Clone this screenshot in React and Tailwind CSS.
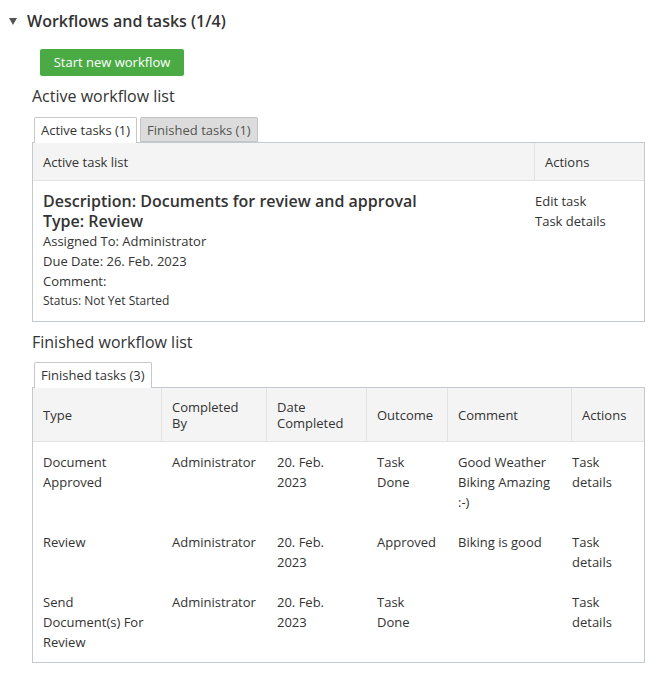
import React from "react";

const font = { fontFamily: '"Open Sans", "Noto Sans", sans-serif' };

function ActivePanel() {
  return (
    <div className="border border-[#c4c8d0] bg-white">
      <div className="grid grid-cols-[501px_1fr] bg-[#f4f4f4] border-b border-[#e2e2e2] text-[13px] leading-[16px] text-[#333]">
        <div className="px-[10px] pt-[11px] pb-[10px]">Active task list</div>
        <div className="px-[10px] pt-[11px] pb-[10px] border-l border-[#e2e2e2]">Actions</div>
      </div>
      <div className="grid grid-cols-[501px_1fr] pt-[10px] pb-[10px] text-[#333]">
        <div className="px-[10px]">
          <div className="text-[16px] leading-[20px] font-semibold">Description: Documents for review and approval</div>
          <div className="text-[16px] leading-[20px] font-semibold">Type: Review</div>
          <div className="text-[13px] leading-[20px]">Assigned To: Administrator</div>
          <div className="text-[13px] leading-[20px]">Due Date: 26. Feb. 2023</div>
          <div className="text-[13px] leading-[20px]">Comment:</div>
          <div className="text-[12px] leading-[20px]">Status: Not Yet Started</div>
        </div>
        <div className="pl-[1px] text-[13px] leading-[20px]">
          <div>Edit task</div>
          <div>Task details</div>
        </div>
      </div>
    </div>
  );
}

const headers = ["Type", "Completed By", "Date Completed", "Outcome", "Comment", "Actions"];
const rows = [
  ["Document Approved", "Administrator", "20. Feb. 2023", "Task Done", "Good Weather Biking Amazing :-)", "Task details"],
  ["Review", "Administrator", "20. Feb. 2023", "Approved", "Biking is good", "Task details"],
  ["Send Document(s) For Review", "Administrator", "20. Feb. 2023", "Task Done", "", "Task details"],
];

function FinishedPanel() {
  const cols = "grid grid-cols-[128px_105px_100px_81px_124px_1fr]";
  return (
    <div className="border border-[#c4c8d0] bg-white text-[#333]">
      <div className={`${cols} bg-[#f4f4f4] border-b border-[#e2e2e2] text-[13px] leading-[16px]`}>
        {headers.map((h, i) => (
          <div
            key={h}
            className={`flex items-center pt-[11px] pb-[10px] ${i === 0 ? "px-[10px]" : "pl-[10px] pr-[10px] border-l border-[#e2e2e2]"}`}
          >
            {h}
          </div>
        ))}
      </div>
      {rows.map((r, ri) => (
        <div key={ri} className={`${cols} text-[13px] leading-[20px]`}>
          {r.map((c, i) => (
            <div
              key={i}
              className={`pt-[10px] pb-[10px] ${i === 0 ? "px-[10px]" : i === 5 ? "pl-[1px] pr-[10px]" : "pl-[11px] pr-[10px]"}`}
            >
              {c}
            </div>
          ))}
        </div>
      ))}
    </div>
  );
}

export default function App() {
  return (
    <div className="w-[669px] min-h-[673px] bg-white pt-[10px] text-[#333]" style={font}>
      <div className="flex items-center h-[22px]">
        <svg className="ml-[9px] mr-[10px]" width="8" height="7" viewBox="0 0 8 7">
          <polygon points="0,0 8,0 4,7" fill="#555" />
        </svg>
        <h2 className="text-[16px] leading-[22px] font-semibold text-[#333]">Workflows and tasks (1/4)</h2>
      </div>
      <div className="pl-[32px] pr-[24px]">
        <button className="mt-[17px] ml-[8px] h-[27px] w-[144px] rounded-[2px] bg-[#4aab45] text-white text-[13px] leading-[27px]">
          Start new workflow
        </button>
        <h3 className="mt-[9px] text-[16px] leading-[22px]">Active workflow list</h3>
        <div className="mt-[10px] flex gap-[3px] pl-[2px] relative z-10 -mb-[1px]">
          <div className="h-[26px] px-[6px] border border-b-0 border-[#c8c8c8] rounded-t-[2px] bg-white text-[13px] leading-[25px]">
            Active tasks (1)
          </div>
          <div className="h-[25px] px-[6px] border border-[#c4c4c4] rounded-t-[2px] bg-[#dcdcdc] text-[13px] leading-[24px] text-[#555]">
            Finished tasks (1)
          </div>
        </div>
        <ActivePanel />
        <h3 className="mt-[9px] text-[16px] leading-[22px]">Finished workflow list</h3>
        <div className="mt-[9px] flex pl-[2px] relative z-10 -mb-[1px]">
          <div className="h-[26px] px-[6px] border border-b-0 border-[#c8c8c8] rounded-t-[2px] bg-white text-[13px] leading-[25px]">
            Finished tasks (3)
          </div>
        </div>
        <FinishedPanel />
      </div>
    </div>
  );
}
